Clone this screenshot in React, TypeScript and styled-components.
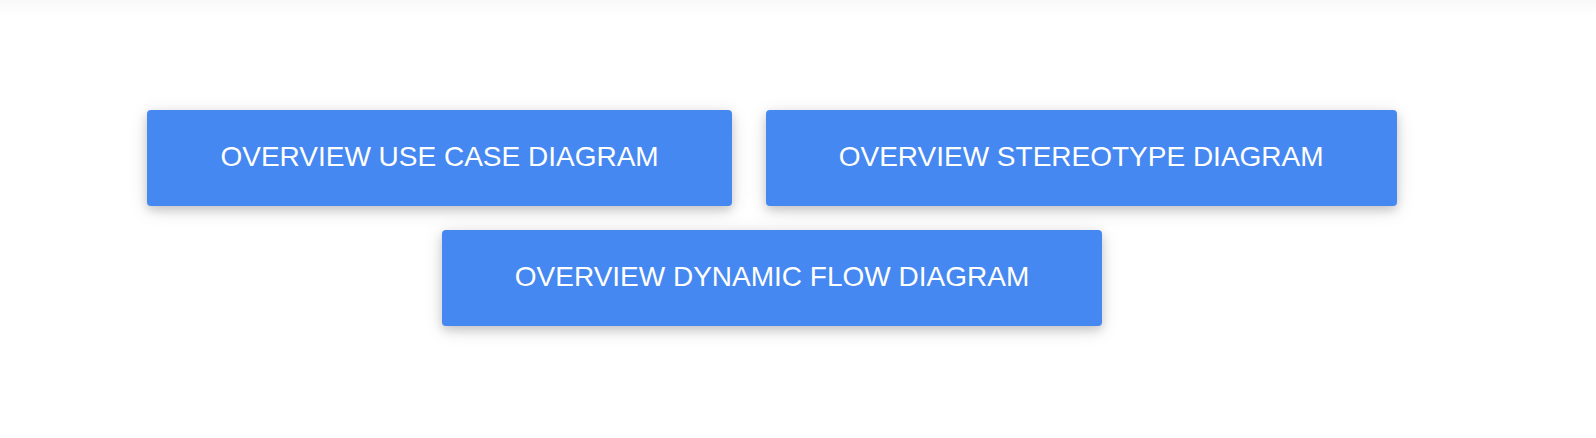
import React from "react";
import styled, { createGlobalStyle } from "styled-components";

const GlobalStyle = createGlobalStyle`
  *, *::before, *::after { box-sizing: border-box; }
  body {
    margin: 0;
    background: #fff;
    font-family: "Liberation Sans", Arial, sans-serif;
  }
`;

const Page = styled.main`
  min-height: 100vh;
  padding: 110px 52px 0 0;
  background: linear-gradient(#f8f8f8, #fcfcfc 8px, #fff 16px);
`;

const Actions = styled.nav`
  display: flex;
  flex-wrap: wrap;
  justify-content: center;
  gap: 24px 34px;
  max-width: 1400px;
  margin: 0 auto;
`;

const DiagramButton = styled.button`
  height: 96px;
  padding: 0 73px 2px;
  border: 0;
  border-radius: 4px;
  background: #4688f1;
  box-shadow: 0 4px 10px rgba(0, 0, 0, 0.16), 0 4px 20px rgba(0, 0, 0, 0.12);
  color: #fff;
  font: 400 28px/36px "Liberation Sans", Arial, sans-serif;
  text-transform: uppercase;
  white-space: nowrap;
  cursor: pointer;
`;

const diagrams = ["Use Case", "Stereotype", "Dynamic Flow"];

export default function App() {
  return (
    <>
      <GlobalStyle />
      <Page>
        <Actions>
          {diagrams.map((name) => (
            <DiagramButton key={name} type="button">{`Overview ${name} Diagram`}</DiagramButton>
          ))}
        </Actions>
      </Page>
    </>
  );
}
